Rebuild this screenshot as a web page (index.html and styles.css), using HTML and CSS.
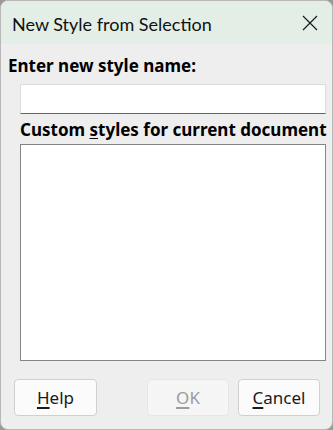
FILE: index.html
```html
<!DOCTYPE html>
<html lang="en">
<head>
    <meta charset="UTF-8">
    <title>New Style from Selection</title>
    <link rel="stylesheet" href="styles.css">
</head>
<body>
    <div class="dialog">
        <div class="titlebar">
            <span class="title">New Style from Selection</span>
            <svg class="close" width="16" height="16" viewBox="0 0 16 16">
                <path d="M1 1 L15 15 M15 1 L1 15" stroke="#1a1a1a" stroke-width="1.2" fill="none"/>
            </svg>
        </div>
        <div class="content">
            <div class="label">Enter new style name:</div>
            <input type="text" class="name-input">
            <div class="label sub">Custom <u>s</u>tyles for current document</div>
            <div class="list"></div>
            <div class="buttons">
                <button class="btn"><u>H</u>elp</button>
                <span class="spacer"></span>
                <button class="btn disabled"><u>O</u>K</button>
                <button class="btn"><u>C</u>ancel</button>
            </div>
        </div>
    </div>
</body>
</html>
```

FILE: styles.css
```css
html, body {
    margin: 0;
    padding: 0;
    background: #9a9a9a;
}

body {
    width: 333px;
    height: 430px;
    font-family: "Noto Sans", "Open Sans", sans-serif;
    color: #000;
}

.dialog {
    box-sizing: border-box;
    width: 333px;
    height: 430px;
    border: 1px solid #b8b8b8;
    border-radius: 8px;
    overflow: hidden;
    background: #eeeeee;
    display: flex;
    flex-direction: column;
}

.titlebar {
    height: 43px;
    background: #e3efe6;
    display: flex;
    align-items: center;
    padding: 0 14px 0 11px;
}

.title {
    flex: 1;
    font-family: Lato, "Noto Sans", sans-serif;
    font-size: 18px;
    color: #111;
    padding-top: 2px;
}

.close {
    margin-top: 1px;
}

.content {
    flex: 1;
    display: flex;
    flex-direction: column;
    padding: 11px 6px 0 7px;
}

.label {
    font-weight: bold;
    font-size: 17px;
    line-height: 21px;
    white-space: nowrap;
}

.label.sub {
    margin-left: 12px;
    margin-top: 5px;
}

.label u {
    text-underline-offset: 2px;
}

.name-input {
    box-sizing: border-box;
    margin: 8px 0 0 12px;
    width: 306px;
    height: 30px;
    border: 1px solid #dcdcdc;
    border-bottom: 1px solid #3f6f94;
    background: #fff;
    outline: none;
}

.list {
    box-sizing: border-box;
    margin: 4px 0 0 12px;
    width: 306px;
    height: 217px;
    border: 1px solid #858585;
    background: #fff;
}

.buttons {
    display: flex;
    gap: 9px;
    margin: 18px 0 0 6px;
}

.spacer {
    flex: 1;
}

.btn {
    box-sizing: border-box;
    width: 83px;
    height: 37px;
    border: 1px solid #d0d0d0;
    border-radius: 4px;
    background: #fbfbfb;
    font-family: "Noto Sans", "Open Sans", sans-serif;
    font-size: 17px;
    color: #1a1a1a;
    padding: 0;
}

.btn u {
    text-underline-offset: 3px;
    text-decoration-thickness: 2px;
}

.btn.disabled {
    background: #f5f5f5;
    border-color: #e6e6e6;
    color: #9b9b9b;
    width: 82px;
}

.btn:last-child {
    width: 82px;
    margin-right: 6px;
}
```
